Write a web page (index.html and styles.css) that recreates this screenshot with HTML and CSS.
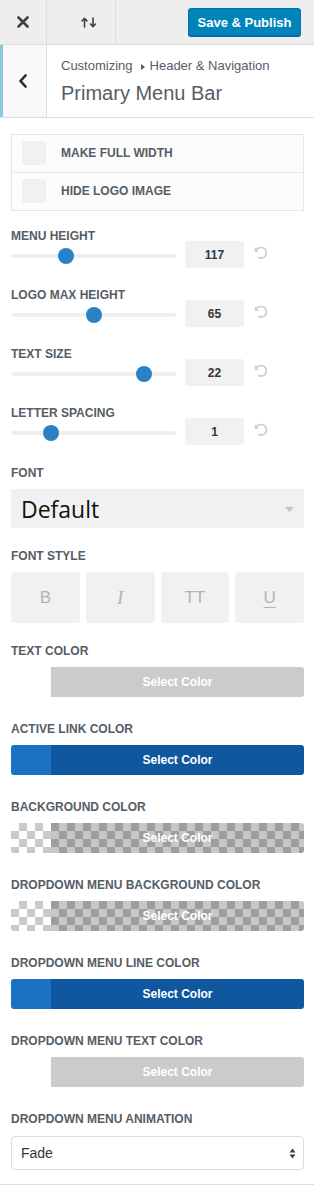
FILE: index.html
```html
<!DOCTYPE html>
<html lang="en">
<head>
<meta charset="utf-8">
<title>Primary Menu Bar</title>
<link rel="stylesheet" href="styles.css">
</head>
<body>
<div class="panel">
  <div class="topbar">
    <button class="tb-btn tb-close" aria-label="Close">
      <svg width="12" height="12" viewBox="0 0 12 12"><path d="M1.5 1.5 L10.5 10.5 M10.5 1.5 L1.5 10.5" stroke="#3d4247" stroke-width="2.6" stroke-linecap="round" fill="none"/></svg>
    </button>
    <button class="tb-btn tb-sort" aria-label="Reorder">
      <svg width="16" height="11" viewBox="0 0 16 11"><path d="M3.5 10 V1.5 M1 4 L3.5 1.3 L6 4 M12 1 V9.5 M9.5 7 L12 9.7 L14.5 7" stroke="#3d4247" stroke-width="1.6" fill="none" stroke-linecap="round" stroke-linejoin="round"/></svg>
    </button>
    <button class="publish">Save &amp; Publish</button>
  </div>

  <div class="section-head">
    <button class="back" aria-label="Back">
      <svg width="10" height="14" viewBox="0 0 10 14"><path d="M7.5 1.5 L2.5 7 L7.5 12.5" stroke="#1f2b36" stroke-width="2.6" fill="none" stroke-linecap="round" stroke-linejoin="round"/></svg>
    </button>
    <div class="titles">
      <div class="crumb">Customizing<span class="crumb-tri"></span>Header &amp; Navigation</div>
      <h1 class="title">Primary Menu Bar</h1>
    </div>
  </div>

  <div class="controls">
    <div class="check-group">
      <label class="check-row"><span class="checkbox"></span><span class="check-label">Make Full Width</span></label>
      <label class="check-row"><span class="checkbox"></span><span class="check-label">Hide Logo Image</span></label>
    </div>

    <div class="sliders">
      <div class="control-slider">
        <div class="control-label">Menu Height</div>
        <div class="slider-row">
          <div class="slider-track"><span class="slider-knob" style="--pos:.318"></span></div>
          <div class="slider-value">117</div>
          <svg class="reset" width="14" height="14" viewBox="0 0 20 20"><path d="M10.25 1.02c5.1 0 8.75 4.04 8.75 8.71 0 4.73-3.65 8.75-8.75 8.75-1.76 0-3.4-.53-4.76-1.44l1.32-1.95c.98.7 2.12 1.09 3.44 1.09 3.42 0 6.06-2.76 6.06-6.45 0-3.62-2.64-6.34-6.06-6.34-2.27 0-4.28 1.25-5.32 3.14l2.09 2.09H1V1.52l2.06 2.06c1.5-1.55 4.04-2.560 7.19-2.56z"/></svg>
        </div>
      </div>
      <div class="control-slider">
        <div class="control-label">Logo Max Height</div>
        <div class="slider-row">
          <div class="slider-track"><span class="slider-knob" style="--pos:.5"></span></div>
          <div class="slider-value">65</div>
          <svg class="reset" width="14" height="14" viewBox="0 0 20 20"><path d="M10.25 1.02c5.1 0 8.75 4.04 8.75 8.710 0 4.73-3.65 8.75-8.75 8.75-1.76 0-3.4-.53-4.76-1.44l1.32-1.95c.98.7 2.12 1.09 3.44 1.09 3.42 0 6.06-2.76 6.06-6.45 0-3.62-2.64-6.34-6.06-6.34-2.27 0-4.28 1.25-5.32 3.14l2.09 2.09H1V1.52l2.06 2.06c1.5-1.55 4.04-2.56 7.19-2.56z"/></svg>
        </div>
      </div>
      <div class="control-slider">
        <div class="control-label">Text Size</div>
        <div class="slider-row">
          <div class="slider-track"><span class="slider-knob" style="--pos:.838"></span></div>
          <div class="slider-value">22</div>
          <svg class="reset" width="14" height="14" viewBox="0 0 20 20"><path d="M10.25 1.02c5.1 0 8.75 4.04 8.75 8.71 0 4.73-3.65 8.75-8.75 8.75-1.76 0-3.4-.53-4.76-1.44l1.32-1.95c.98.7 2.12 1.09 3.44 1.09 3.42 0 6.06-2.76 6.06-6.45 0-3.62-2.64-6.34-6.06-6.34-2.27 0-4.28 1.25-5.32 3.14l2.09 2.09H1V1.52l2.06 2.06c1.5-1.55 4.04-2.56 7.19-2.56z"/></svg>
        </div>
      </div>
      <div class="control-slider">
        <div class="control-label">Letter Spacing</div>
        <div class="slider-row">
          <div class="slider-track"><span class="slider-knob" style="--pos:.216"></span></div>
          <div class="slider-value">1</div>
          <svg class="reset" width="14" height="14" viewBox="0 0 20 20"><path d="M10.25 1.02c5.1 0 8.75 4.04 8.75 8.71 0 4.73-3.65 8.75-8.75 8.75-1.76 0-3.4-.53-4.76-1.44l1.32-1.95c.98.7 2.12 1.09 3.44 1.09 3.42 0 6.06-2.76 6.06-6.45 0-3.62-2.64-6.34-6.06-6.34-2.27 0-4.280 1.25-5.32 3.14l2.09 2.09H1V1.52l2.06 2.06c1.5-1.55 4.04-2.56 7.19-2.56z"/></svg>
        </div>
      </div>
    </div>

    <div class="control">
      <div class="control-label spaced">Font</div>
      <div class="font-select">
        <span>Default</span>
        <svg class="font-arrow" width="9" height="5" viewBox="0 0 9 5"><path d="M0 0 H9 L4.5 5 Z" fill="#c4c4c4"/></svg>
      </div>
    </div>

    <div class="control">
      <div class="control-label spaced">Font Style</div>
      <div class="style-grid">
        <div class="style-btn">B</div>
        <div class="style-btn style-italic">I</div>
        <div class="style-btn">TT</div>
        <div class="style-btn style-under">U</div>
      </div>
    </div>

    <div class="control control-color">
      <div class="control-label spaced">Text Color</div>
      <div class="color-btn color-light"><span class="swatch"></span><span class="color-text">Select Color</span></div>
    </div>

    <div class="control control-color">
      <div class="control-label spaced">Active Link Color</div>
      <div class="color-btn color-blue"><span class="swatch"></span><span class="color-text">Select Color</span></div>
    </div>

    <div class="control control-color">
      <div class="control-label spaced">Background Color</div>
      <div class="color-btn color-clear"><span class="swatch"></span><span class="color-text">Select Color</span></div>
    </div>

    <div class="control control-color">
      <div class="control-label spaced">Dropdown Menu Background Color</div>
      <div class="color-btn color-clear"><span class="swatch"></span><span class="color-text">Select Color</span></div>
    </div>

    <div class="control control-color">
      <div class="control-label spaced">Dropdown Menu Line Color</div>
      <div class="color-btn color-blue"><span class="swatch"></span><span class="color-text">Select Color</span></div>
    </div>

    <div class="control control-color">
      <div class="control-label spaced">Dropdown Menu Text Color</div>
      <div class="color-btn color-light"><span class="swatch"></span><span class="color-text">Select Color</span></div>
    </div>

    <div class="control control-last">
      <div class="control-label spaced-last">Dropdown Menu Animation</div>
      <div class="anim-select">
        <span>Fade</span>
        <svg class="anim-arrows" width="7" height="11" viewBox="0 0 7 11"><path d="M0.5 4.5 L3.5 0.5 L6.5 4.5 Z M0.5 6.5 L3.5 10.5 L6.5 6.5 Z" fill="#3a3f44"/></svg>
      </div>
    </div>
  </div>
</div>
</body>
</html>
```

FILE: styles.css
```css
* {
  box-sizing: border-box;
  margin: 0;
  padding: 0;
}

body {
  background: #fff;
  font-family: "Liberation Sans", Arial, sans-serif;
  color: #555d66;
  width: 314px;
}

button {
  font-family: inherit;
  cursor: pointer;
}

/* top bar */
.topbar {
  display: flex;
  align-items: center;
  height: 45px;
  background: #eee;
  border-bottom: 1px solid #ddd;
}

.tb-btn {
  height: 44px;
  display: flex;
  align-items: center;
  justify-content: center;
  background: transparent;
  border: 0;
  border-right: 1px solid #ddd;
}

.tb-close {
  width: 47px;
}

.tb-sort {
  width: 69px;
  padding-left: 16px;
}

.publish {
  margin-left: auto;
  margin-right: 13px;
  width: 113px;
  height: 28px;
  background: #0085ba;
  border: 1px solid #0073aa;
  border-radius: 3px;
  box-shadow: 0 1px 0 #006799;
  color: #fff;
  font-weight: bold;
  font-size: 13px;
}

/* section header */
.section-head {
  display: flex;
  height: 73px;
  border-bottom: 1px solid #ddd;
  background: #fff;
}

.back {
  width: 47px;
  display: flex;
  align-items: center;
  justify-content: center;
  padding-right: 3px;
  background: #f9f9f9;
  border: 0;
  border-left: 3px solid #8cc6df;
  border-right: 1px solid #ddd;
}

.titles {
  padding: 13px 0 0 14px;
}

.crumb {
  display: flex;
  align-items: center;
  font-size: 13px;
  line-height: 16px;
  color: #555d66;
}

.crumb-tri {
  width: 0;
  height: 0;
  margin: 1px 5px 0 8px;
  border-top: 3.5px solid transparent;
  border-bottom: 3.5px solid transparent;
  border-left: 4px solid #555d66;
}

.title {
  margin-top: 7px;
  font-size: 20px;
  line-height: 24px;
  font-weight: normal;
  color: #555d66;
}

/* controls */
.controls {
  padding: 16px 10px 14px 11px;
  border-bottom: 1px solid #ddd;
}

.check-group {
  border: 1px solid #e6e6e6;
  background: #fcfcfc;
  margin-bottom: 20px;
}

.check-row {
  display: flex;
  align-items: center;
  gap: 15px;
  padding: 6px 10px 7px;
}

.check-row + .check-row {
  border-top: 1px solid #e8e8e8;
}

.checkbox {
  width: 24px;
  height: 24px;
  background: #f1f1f1;
  border-radius: 3px;
}

.check-label,
.control-label {
  font-size: 12px;
  font-weight: bold;
  text-transform: uppercase;
  color: #555d66;
}

.control-label {
  line-height: 10px;
}

.control-label.spaced {
  margin-bottom: 11px;
}

.control-label.spaced-last {
  margin-bottom: 12px;
}

/* sliders */
.sliders {
  display: flex;
  flex-direction: column;
  gap: 22px;
  margin-bottom: 23px;
}

.slider-row {
  display: grid;
  grid-template-columns: 1fr 59px 14px;
  column-gap: 9px;
  align-items: center;
  margin-right: 37px;
}

.slider-row .reset {
  margin-left: 1px;
  margin-top: -4px;
  fill: #cfcfcf;
}

.slider-track {
  position: relative;
  height: 4px;
  background: #efefef;
  border-radius: 2px;
  margin-top: 2px;
}

.slider-knob {
  position: absolute;
  top: 50%;
  left: calc(var(--pos) * (100% - 16px));
  width: 16px;
  height: 16px;
  margin-top: -8px;
  border-radius: 50%;
  background: #2a82c4;
}

.slider-value {
  height: 27px;
  display: flex;
  align-items: center;
  justify-content: center;
  background: #f1f1f1;
  border-radius: 3px;
  font-size: 12px;
  font-weight: bold;
  color: #32373c;
}

/* generic controls */
.control {
  margin-bottom: 23px;
}

.control-color {
  margin-bottom: 27px;
}

.control-last {
  margin-bottom: 0;
}

.font-select {
  position: relative;
  height: 39px;
  display: flex;
  align-items: center;
  padding-left: 10px;
  background: #f1f1f1;
  font-family: "Open Sans", sans-serif;
  font-size: 23px;
  color: #111;
}

.font-arrow {
  position: absolute;
  right: 10px;
  top: 18px;
}

.style-grid {
  display: grid;
  grid-template-columns: repeat(4, 1fr);
  gap: 6px;
}

.style-btn {
  height: 51px;
  display: flex;
  align-items: center;
  justify-content: center;
  background: #f1f1f1;
  border-radius: 3px;
  font-size: 17px;
  color: #b3b3b3;
}

.style-italic {
  font-family: "Liberation Serif", serif;
  font-style: italic;
  font-size: 19px;
}

.style-under {
  text-decoration: underline;
  text-underline-offset: 4px;
  text-decoration-thickness: 1px;
}

/* color buttons */
.color-btn {
  display: flex;
  height: 30px;
  border-radius: 3px;
  overflow: hidden;
}

.swatch {
  width: 40px;
}

.color-text {
  flex: 1;
  display: flex;
  align-items: center;
  justify-content: center;
  color: #fff;
  font-size: 12px;
  font-weight: bold;
}

.color-light .swatch {
  background: #fff;
}

.color-light .color-text {
  background: #cbcbcb;
}

.color-blue .swatch {
  background: #1b71c3;
}

.color-blue .color-text {
  background: #0f58a0;
}

.color-clear {
  background: repeating-conic-gradient(#cacaca 0 25%, #fff 0 50%) 0 0 / 16px 16px;
}

.color-clear .color-text {
  background: rgba(0, 0, 0, 0.22);
}

/* animation select */
.anim-select {
  position: relative;
  height: 34px;
  display: flex;
  align-items: center;
  padding-left: 9px;
  border: 1px solid #ddd;
  border-radius: 4px;
  background: #fff;
  font-size: 14px;
  color: #32373c;
}

.anim-arrows {
  position: absolute;
  right: 7px;
  top: 11px;
}
```
